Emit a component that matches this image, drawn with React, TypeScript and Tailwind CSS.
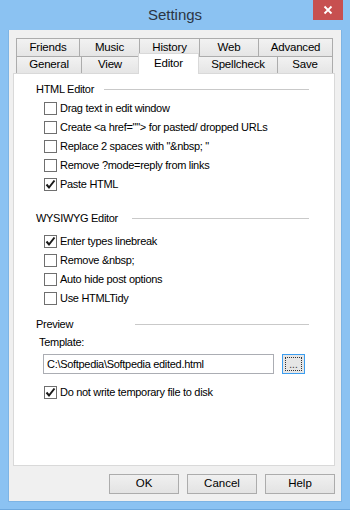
import React from 'react'

const font = { fontFamily: '"Liberation Sans", Arial, sans-serif' }

function Tab({ label, w, selected = false }: { label: string; w: string; selected?: boolean }) {
  if (selected) {
    return (
      <div
        className={`${w} h-[21px] -mb-px -ml-px relative z-10 bg-white border border-b-0 border-[#d9d9d9] flex items-center justify-center text-[11.5px] tracking-[-0.2px] text-black`}
      >
        {label}
      </div>
    )
  }
  return (
    <div
      className={`${w} h-full -ml-px first:ml-0 bg-gradient-to-b from-[#f2f2f2] to-[#e5e5e5] border border-b-0 border-[#acacac] flex items-center justify-center text-[11.5px] tracking-[-0.2px] text-black`}
    >
      {label}
    </div>
  )
}

function Check({ label, checked = false }: { label: string; checked?: boolean }) {
  return (
    <div className="h-[19px] flex items-center pl-[30px]">
      <div className="w-[13px] h-[13px] border border-[#6f6f6f] bg-white flex items-center justify-center">
        {checked && (
          <svg width="11" height="11" viewBox="0 0 11 11">
            <path d="M1.5 5.5 L4 8.5 L9.5 1.5" fill="none" stroke="#1a1a1a" strokeWidth="2" />
          </svg>
        )}
      </div>
      <span className="ml-[3px] text-[11px] tracking-[-0.3px] text-black">{label}</span>
    </div>
  )
}

function Heading({ label, lineStart }: { label: string; lineStart: string }) {
  return (
    <div className="h-[16px] flex items-center pl-[22px] pr-[25px]">
      <span className="text-[11px] tracking-[-0.3px] text-black">{label}</span>
      <div className={`${lineStart} flex-1 h-px bg-[#c9c9c9]`} />
    </div>
  )
}

function Button({ label }: { label: string }) {
  return (
    <div className="w-[70px] h-[20px] bg-gradient-to-b from-[#f0f0f0] to-[#e3e3e3] border border-[#acacac] flex items-center justify-center text-[11.5px] text-black">
      {label}
    </div>
  )
}

export default function App() {
  return (
    <div className="w-[350px] h-[510px] bg-[#8bc2f2] flex flex-col border-b border-[#6fa9de]" style={font}>
      <div className="h-[30px] relative flex items-center justify-center">
        <span className="text-[15px] text-[#2b3544] pt-[1px]">Settings</span>
        <div className="absolute top-0 right-[7px] w-[30px] h-[20px] bg-[#c75050] flex items-center justify-center">
          <svg width="10" height="10" viewBox="0 0 10 10">
            <path d="M1.5 1.5 L8.5 8.5 M8.5 1.5 L1.5 8.5" stroke="#fff" strokeWidth="1.8" />
          </svg>
        </div>
      </div>

      <div className="mx-[8px] h-[472px] bg-[#f0f0f0] flex flex-col pt-[8px] border border-[#7eb4e4] border-t-0">
        <div className="ml-[4px] mr-[6px] flex flex-col">
          <div className="h-[18px] flex pl-[3px]">
            <Tab label="Friends" w="w-[64px]" />
            <Tab label="Music" w="w-[61px]" />
            <Tab label="History" w="w-[61px]" />
            <Tab label="Web" w="w-[60px]" />
            <Tab label="Advanced" w="w-[75px]" />
          </div>
          <div className="h-[17px] flex items-end pl-[3px]">
            <Tab label="General" w="w-[66px]" />
            <Tab label="View" w="w-[58px]" />
            <Tab label="Editor" w="w-[61px]" selected />
            <Tab label="Spellcheck" w="w-[80px]" />
            <Tab label="Save" w="w-[56px]" />
          </div>
          <div className="h-[393px] bg-white border border-[#d9d9d9] flex flex-col pt-[7px]">
            <Heading label="HTML Editor" lineStart="ml-[10px]" />
            <div className="mt-[2px] flex flex-col">
              <Check label="Drag text in edit window" />
              <Check label={'Create <a href=""> for pasted/ dropped URLs'} />
              <Check label={'Replace 2 spaces with "&nbsp; "'} />
              <Check label="Remove ?mode=reply from links" />
              <Check label="Paste HTML" checked />
            </div>

            <div className="mt-[16px]">
              <Heading label="WYSIWYG Editor" lineStart="ml-[14px]" />
            </div>
            <div className="mt-[6px] flex flex-col">
              <Check label="Enter types linebreak" checked />
              <Check label={'Remove &nbsp;'} />
              <Check label="Auto hide post options" />
              <Check label="Use HTMLTidy" />
            </div>

            <div className="mt-[8px]">
              <Heading label="Preview" lineStart="ml-[62px]" />
            </div>
            <div className="pl-[25px] mt-[2px] h-[16px] flex items-center text-[11px] tracking-[-0.3px] text-black">
              Template:
            </div>
            <div className="mt-[4px] pl-[29px] flex items-center">
              <div className="w-[231px] h-[20px] border border-[#abadb3] bg-white flex items-center pl-[3px] text-[11px] tracking-[-0.3px] text-black">
                C:\Softpedia\Softpedia edited.html
              </div>
              <div className="ml-[8px] w-[23px] h-[20px] border border-[#3c9ef0] bg-[#e6e6e6] p-[2px]">
                <div className="w-full h-full border border-dotted border-[#333] flex items-end justify-center text-[10px] leading-[10px] text-[#333]">
                  ...
                </div>
              </div>
            </div>
            <div className="mt-[9px]">
              <Check label="Do not write temporary file to disk" checked />
            </div>
          </div>
        </div>
        <div className="mt-[8px] flex justify-end gap-[8px] pr-[6px]">
          <Button label="OK" />
          <Button label="Cancel" />
          <Button label="Help" />
        </div>
      </div>
    </div>
  )
}
